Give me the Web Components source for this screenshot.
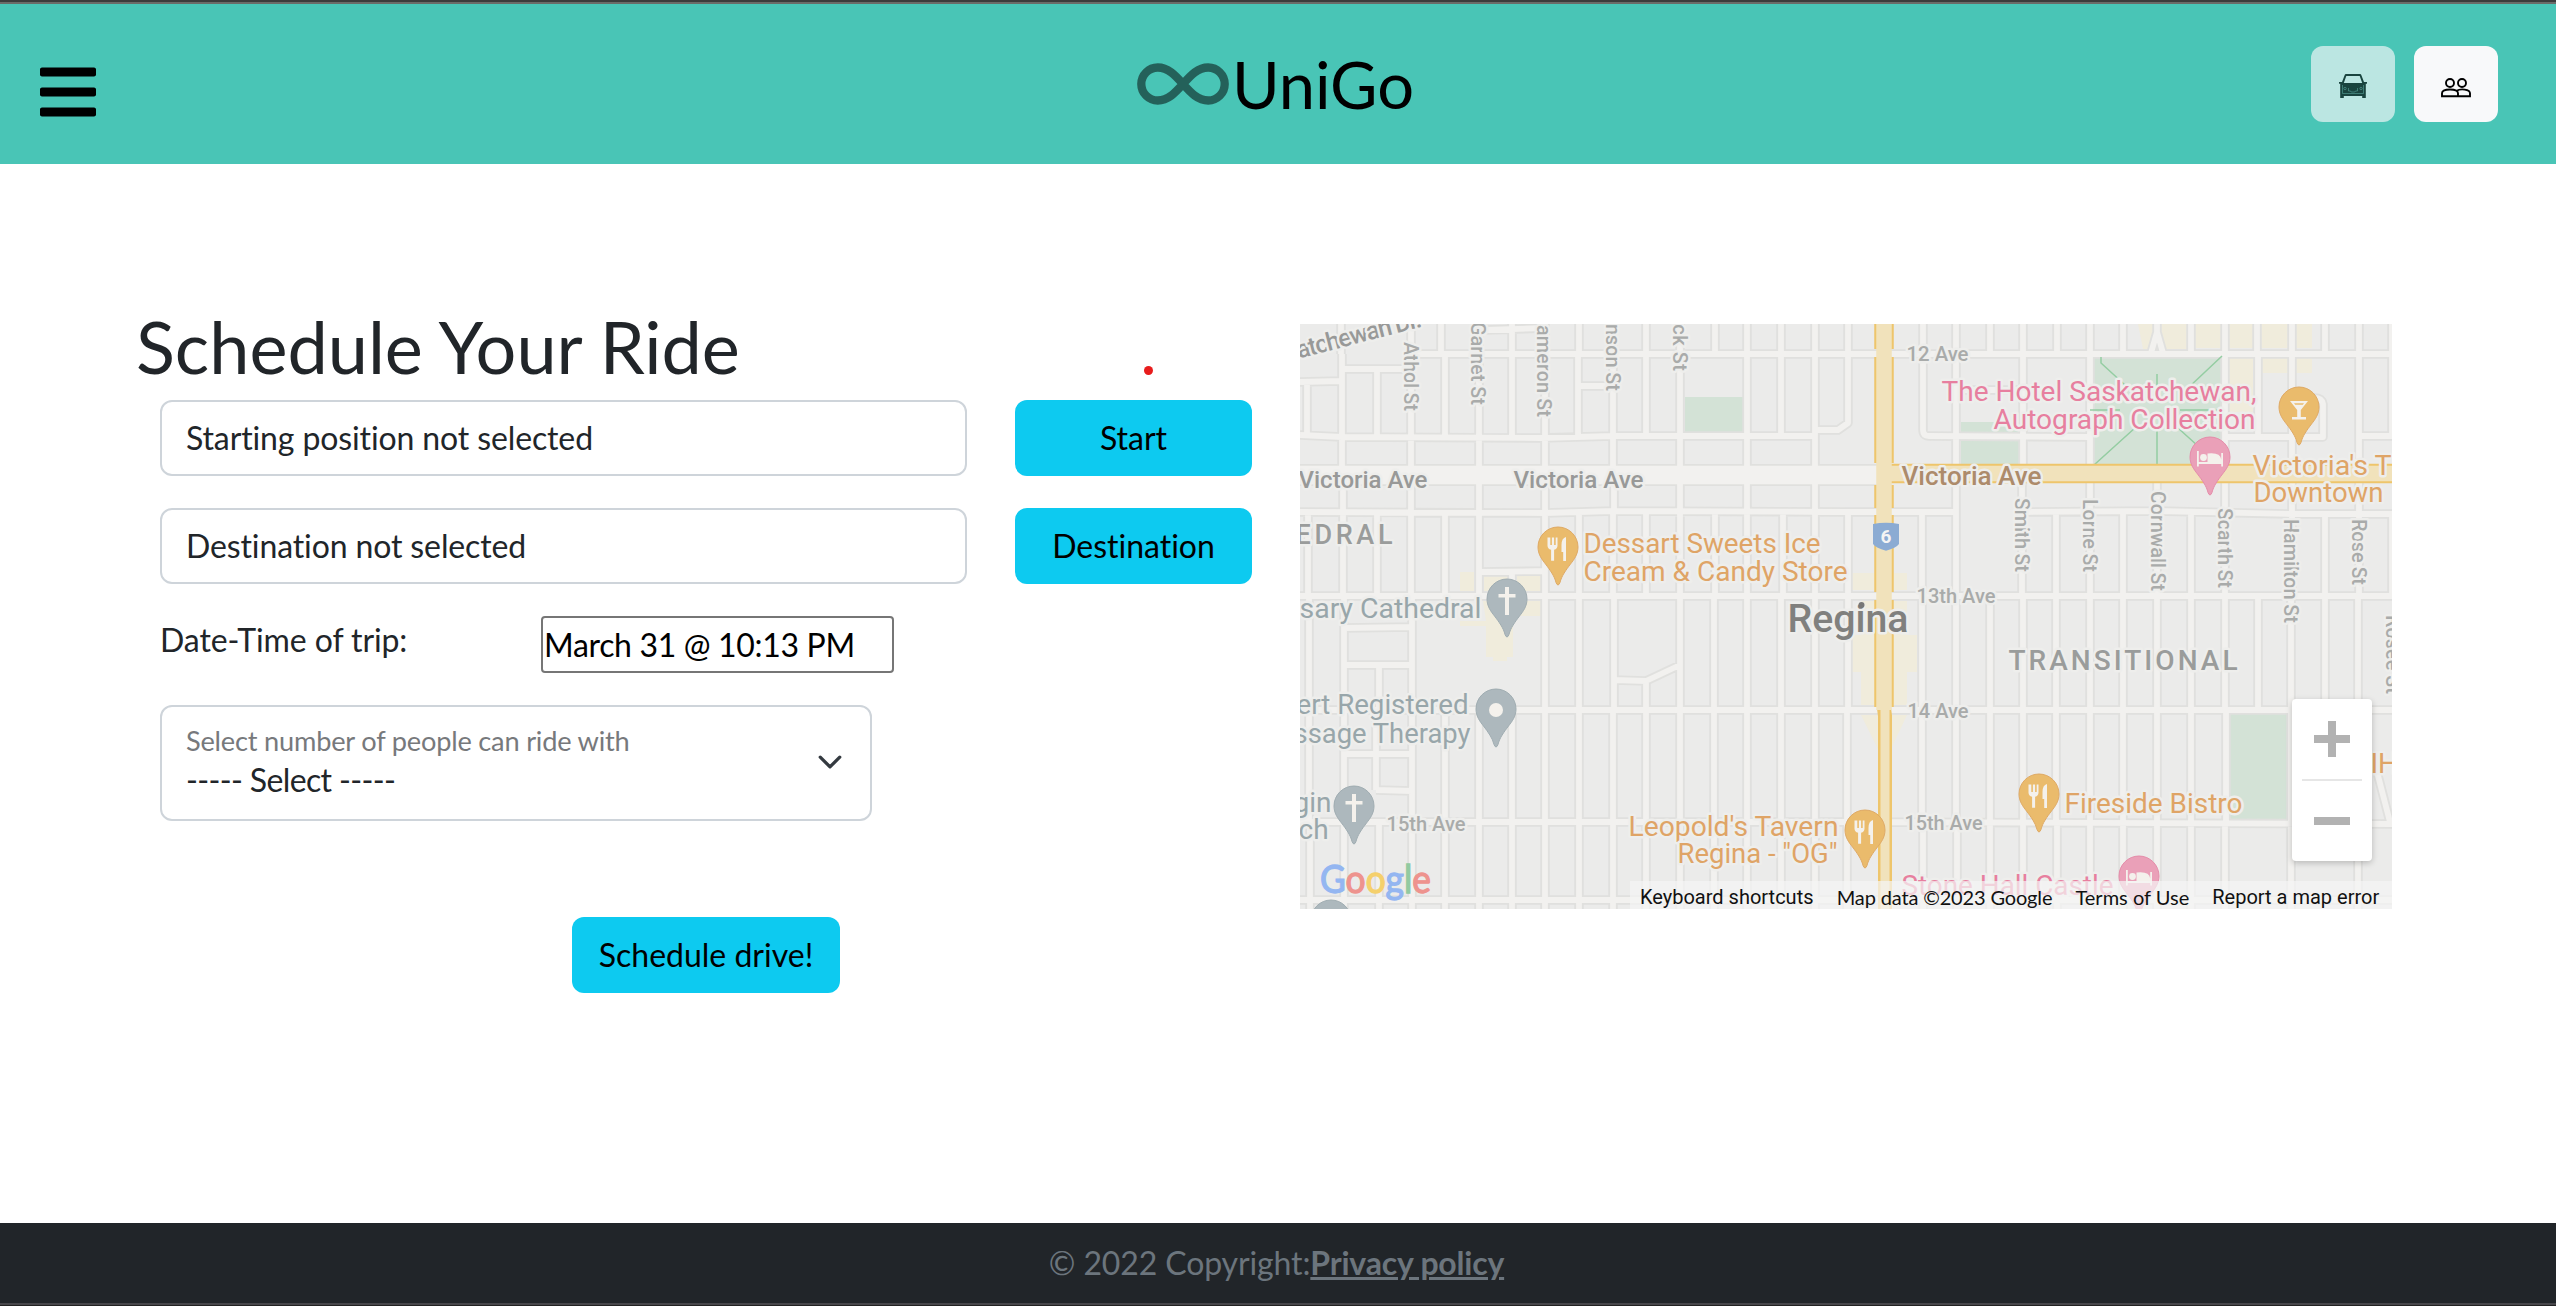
<!DOCTYPE html>
<html lang="en">
<head>
<meta charset="utf-8">
<title>UniGo</title>
<style>
html,body{margin:0;height:100%}
body{font-family:Lato,"Open Sans",sans-serif;font-size:32px;line-height:48px;color:#212529;background:#fff;overflow:hidden;font-variant-ligatures:none}
</style>
</head>
<body>
<unigo-app></unigo-app>
<script>
const define=(name,html,setup)=>customElements.define(name,class extends HTMLElement{
  constructor(){super();this.attachShadow({mode:'open'}).innerHTML=html;if(setup)setup(this.shadowRoot,this)}
});

define('icon-button',`<style>
:host{display:block;width:84px;height:76px}
button{all:unset;box-sizing:border-box;width:100%;height:100%;border-radius:12px;background:#f8f9fa;color:#000;display:flex;align-items:center;justify-content:center}
:host([muted]) button{opacity:.65}
</style><button><slot></slot></button>`);

define('unigo-header',`<style>
:host{display:block;border-top:2px solid #3c3c3c}
header{box-sizing:border-box;height:162px;border-top:2px solid #6b6b68;background:#49c5b6;display:grid;grid-template-columns:1fr auto 1fr;align-items:center;padding:0 58px 0 40px}
.menu{display:block;padding-top:16px;width:56px;height:64px}
.logo{display:flex;align-items:center;font-size:65px;line-height:76px;color:#000;gap:3px;padding-left:13px}
.logo svg{opacity:.5;display:block}
nav{display:flex;justify-content:flex-end;gap:19px}
</style><header>
<svg class="menu" viewBox="0 0 448 512"><path d="M16 132h416c8.8 0 16-7.2 16-16V76c0-8.800-7.200-16-16-16H16C7.200 60 0 67.200 0 76v40c0 8.800 7.200 16 16 16zm0 160h416c8.800 0 16-7.200 16-16v-40c0-8.800-7.200-16-16-16H16c-8.800 0-16 7.200-16 16v40c0 8.800 7.200 16 16 16zm0 160h416c8.800 0 16-7.200 16-16v-40c0-8.800-7.200-16-16-16H16c-8.800 0-16 7.200-16 16v40c0 8.800 7.200 16 16 16z"/></svg>
<div class="logo"><svg width="92" height="42" viewBox="0 0 92 42"><path d="M46 21C38 12 31 4.500 20.800 4.500a16.500 16.500 0 0 0 0 33C31 37.500 38 30 46 21S61 4.500 71.200 4.500a16.500 16.500 0 0 1 0 33C61 37.500 54 30 46 21z" fill="none" stroke="#000" stroke-width="8.300"/></svg><span>UniGo</span></div>
<nav>
<icon-button muted><svg width="28" height="24" viewBox="0 0 28 24" style="margin-top:4px"><path fill-rule="evenodd" d="M7.500 0h13c1 0 1.700.500 2 1.400L25 8h3v1.800h-1.200V24h-3.600v-2H4.800v2H1.200V9.800H0V8h3L5.500 1.400C5.800.500 6.500 0 7.500 0zM7.300 1.900 4.800 9h18.400L20.700 1.900z"/><g fill="none" stroke="#5f9089" stroke-width=".6"><path d="M3.500 11v8.500h21V11M9.500 14v3h2l.7 1h3.600l.7-1h2v-3"/><circle cx="6" cy="14.500" r="1.200"/><circle cx="22" cy="14.500" r="1.200"/></g></svg></icon-button>
<icon-button><svg width="30" height="20" viewBox="0 0 30 20" style="margin-top:8px"><g fill="none" stroke="#000" stroke-width="1.900"><circle cx="9" cy="5" r="4"/><circle cx="21" cy="5" r="4"/><path d="M1 18.300v-3c0-5 16-5 16 0v3zM15.500 12.900c4-2.600 13.500-1.700 13.500 2.400v3H17"/></g></svg></icon-button>
</nav></header>`);

define('ride-field',`<style>
:host{display:block}
div{box-sizing:border-box;height:76px;border:2px solid #ced4da;border-radius:12px;padding:12px 24px;letter-spacing:-.12px}
</style><div><slot></slot></div>`);

define('ride-button',`<style>
:host{display:block}
button{all:unset;box-sizing:border-box;display:block;width:100%;height:76px;padding:14px 0;text-align:center;border-radius:12px;background:#0dcaf0;color:#000;font:inherit;font-variant-ligatures:none}
</style><button><slot></slot></button>`);

define('date-field',`<style>
:host{display:grid;grid-template-columns:381px 353px;align-items:start}
.box{box-sizing:border-box;height:57px;border:2px solid #767676;border-radius:4px;padding:0 1px;color:#000;line-height:53px;letter-spacing:-.33px}
::slotted(span){letter-spacing:-.1px}
</style><slot name="label"></slot><div class="box"><slot></slot></div>`);

define('floating-select',`<style>
:host{display:block}
.box{box-sizing:border-box;width:712px;height:116px;border:2px solid #ced4da;border-radius:12px;padding:14px 27px 0 24px;display:flex;justify-content:space-between}
.label{font-size:27.200px;line-height:40px;color:#77797c;letter-spacing:-.2px}
.value{line-height:38px;letter-spacing:-.63px}
svg{margin-top:28px;display:block}
</style><div class="box"><div><div class="label"><slot name="label"></slot></div><div class="value"><slot></slot></div></div>
<svg width="26" height="26" viewBox="0 0 16 16" fill="none" stroke="#343a40" stroke-width="2" stroke-linecap="round" stroke-linejoin="round"><path d="m2 5 6 6 6-6"/></svg></div>`);

define('ride-form',`<style>
:host{display:block;width:1116px;position:relative}
h1{font-weight:400;font-size:72px;line-height:86px;margin:0 0 11px}
.rows{display:flex;flex-direction:column;gap:32px;padding-left:24px}
.row{display:grid;grid-template-columns:807px 237px;gap:48px}
.submit{width:268px;margin:64px 0 0 412px}
.dot{position:absolute;left:1008px;top:63px;width:9px;height:9px;border-radius:50%;background:#e81c1c}
</style><h1>Schedule Your Ride</h1><i class="dot"></i>
<div class="rows">
<div class="row"><ride-field>Starting position not selected</ride-field><ride-button>Start</ride-button></div>
<div class="row"><ride-field>Destination not selected</ride-field><ride-button>Destination</ride-button></div>
<date-field><span slot="label">Date-Time of trip:</span>March 31 @ 10:13 PM</date-field>
<floating-select><span slot="label">Select number of people can ride with</span>----- Select -----</floating-select>
<ride-button class="submit">Schedule drive!</ride-button>
</div>`);

define('zoom-control',`<style>
:host{display:block;width:80px;height:162px;box-sizing:border-box;background:#fff;border-radius:4px;box-shadow:0 2px 6px rgba(0,0,0,.22)}
svg{display:block}
</style><svg width="80" height="162"><path d="M22 40h36M40 22v36M22 122h36" stroke="#b2b2b2" stroke-width="8"/><path d="M10 81h60" stroke="#e6e6e6" stroke-width="2"/></svg>`);

define('map-credits',`<style>
:host{display:flex;height:28px;font:20px/33px Roboto,sans-serif;color:#111;background:rgba(245,245,245,.7);overflow:hidden}
span{white-space:nowrap;padding-left:10px;box-sizing:border-box}
.l{font-family:Lato,sans-serif}
</style><span style="width:196px">Keyboard shortcuts</span><span class="l" style="width:240px;padding-left:11px;letter-spacing:-.15px">Map data ©2023 Google</span><span class="l" style="width:137px">Terms of Use</span><span style="width:190px">Report a map error</span>`);

/* Street network as [y0, y1, xs] verticals grouped by the band between two avenues. */
const bands=[
 [-4,30,[41,111,141,179,212,245,279,313,346,380,415,447,481,515,548,623,656,690,723,757,790,823,891,925,957,992,1025,1059,1092]],
 [30,113,[42,111,145,179,212,245,278,313,346,380,447,481,515,656,723,790,925,958,992,1059,1092]],
 [113,151,[42,111,179,245,313,380,447,515,656,723,790,925,992,1059]],
 [151,188,[43,111,179,245,314,380,447,515,656,722,790,857,925,992,1059]],
 [188,272,[8,43,77,111,145,179,245,279,313,346,380,415,447,483,515,548,622,656,722,756,790,823,857,891,925,992,1025,1059,1092]],
 [272,386,[9,44,112,245,279,314,380,414,447,481,515,548,622,656,690,723,756,790,823,857,891,925,958,991,1025,1058]],
 [386,498,[9,44,112,145,179,212,245,279,313,346,380,414,447,481,515,547,622,656,690,723,756,790,823,857,891,926,991,1058]],
 [498,590,[10,44,79,112,145,179,212,245,279,313,346,380,414,447,481,515,547,623,657,690,723,757,790,823,857,891,925,991,1058]]
];
const roads=bands.map(([a,b,xs])=>xs.map(x=>`M${x} ${a}V${b}`).join('')).join('')+
 'M111 30H1096M0 111L42 113 240 114 313 112H515M0 188L245 189 313 187 548 188H656M722 188L857 187 992 190H1096M-4 272H1096M-4 386H1096M-4 498L548 498 1096 500M-4 576H1096'+
 'M0 58L40 57M42 45H111M7 58V112M77 45V113M278 62H313M185 6L245 4M179 248L245 247M212 248V272M44 304L112 303M44 341H112M79 341V386M314 356L346 357 380 341M346 357V386M44 430H112M76 386V466M76 466L112 467'+
 'M515 106H538L548 99V30M623 30V106Q623 112 629 112L790 113M656 66H723M925 113H1023V80Q1022 74 1014 74M1059 112H1096M857 -4V8L851 29M857 8L863 29M1075 440L1090 498';

const pinShape='M0 0C11 0 20 9 20 20C20 27 16.500 32 12.500 37C8 43 3.500 49 2 55.500Q1 58 0 58Q-1 58-2 55.500C-3.500 49-8 43-12.500 37C-16.500 32-20 27-20 20C-20 9-11 0 0 0Z';
const glyphs={
 food:'<path d="M-10.500 10.500v8q0 3.500 3.600 4.200v11h3v-11q3.400-.7 3.400-4.200v-8h-1.800v7.500h-1.600v-7.500h-2.200v7.500h-1.600v-7.500zM8 10q-4.500 1-4.500 8v7h1.700v9H8z"/>',
 cross:'<path d="M-2 8h4v7h6.500v3.500H2V36h-4V18.500h-6.500V15H-2z"/>',
 dot:'<circle cy="21" r="7"/>',
 bed:'<path d="M-13 14h1.800v11H-2.500V16.500q13-1.500 13.700 6V16H13v13.500h-1.800V27h-22.400v2.500H-13z"/><circle cx="-6.500" cy="20.500" r="3.400"/>',
 glass:'<path d="M-9 14H9L1.800 23v7H7v2.500H-7V30h5.200v-7zm4 2.200 1.200 1.600h7.600L5 16.200z" fill-rule="evenodd"/>'
};
const tints={o:['#eabb6c','#dfaa66'],g:['#adb8bd','#a0adb2'],p:['#eaa0b8','#e48daa']};
const pins=[[258,203,'food','o'],[207,255,'cross','g'],[196,365,'dot','g'],[54,462,'cross','g'],[31,576,'dot','g'],[565,486,'food','o'],[739,450,'food','o'],[839,532,'bed','p'],[910,113,'bed','p'],[999,63,'glass','o']]
 .map(([x,y,g,t])=>`<g transform="translate(${x} ${y})"><path d="${pinShape}" fill="${tints[t][0]}" stroke="${tints[t][1]}"/><g fill="#f4f1ec">${glyphs[g]}</g></g>`).join('');

const O='#dfa466',P='#e77f9f',G='#98a6aa',S='#a9abaa',A='#989998';
/* x, baseline, text, size, colour, drawn length, weight */
const labels=[
 [285,229,'Dessart Sweets Ice',28,O,237],[285,257,'Cream &amp; Candy Store',28,O,264],
 [330,512,"Leopold's Tavern",28,O,210],[379,539,'Regina - "OG"',28,O,160],[766,489,'Fireside Bistro',28,O,178],
 [954,151,"Victoria's T",28,O,139],[955,178,'Downtown',28,O,130],[1072,449,'IH',28,O,0],
 [643,77,'The Hotel Saskatchewan,',28,P,315],[695,105,'Autograph Collection',28,P,262],[603,571,'Stone Hall Castle',28,P,212],
 [1,294,'sary Cathedral',28,G,182],[-2,390,'ert Registered',28,G,172],[-5,419,'ssage Therapy',28,G,177],[-5,488,'gin',28,G,0],[0,515,'ch',28,G,0],
 [0,164,'Victoria Ave',24,A,129,'500'],[215,164,'Victoria Ave',24,A,130,'500'],[603,161,'Victoria Ave',26,'#ad8b6b',140,'500'],
 [-3,220,'EDRAL',27,'#9a9c9b',97,'500'],[710,346,'TRANSITIONAL',28,'#9a9c9b',229,'500'],[489,308,'Regina',39,'#80807e',121,'500'],
 [608,37,'12 Ave',20,S,62,'500'],[618,279,'13th Ave',20,S,79,'500'],[609,394,'14 Ave',20,S,61,'500'],[606,506,'15th Ave',20,S,78,'500'],[88,507,'15th Ave',20,S,79,'500']
].map(([x,y,t,s,c,l,w])=>`<text x="${x-1.5}" y="${y-.5}" font-size="${s}" fill="${c}" ${l?`textLength="${l}" lengthAdjust="${/^(EDRAL|TRANS)/.test(t)?'spacing':'spacingAndGlyphs'}"`:''} ${w?`font-weight="${w}"`:''}>${t}</text>`).join('');
/* baseline x, end y, text, length */
const streets=[[104,87,'Athol St',69],[171.500,81,'Garnet St',83],[237.500,93,'ameron St',92],[306.500,67,'nson St',67],[373,47,'ack St',58],[715.500,248,'Smith St',74],[783.500,248,'Lorne St',73],[851,267,'Cornwall St',100],[918,264,'Scarth St',80],[984.500,299,'Hamilton St',104],[1052.500,261,'Rose St',66],[1086,370,'Rosee St',79]]
 .map(([x,y,t,l])=>`<text transform="translate(${x-.5} ${y-l}) rotate(90)" font-size="20" font-weight="500" fill="${S}" textLength="${l}">${t}</text>`).join('');

define('ride-map',`<style>
:host{display:block;position:relative;width:1092px;height:585px;overflow:hidden;background:#ebebea}
svg.map{display:block;font-family:Roboto,sans-serif}
.labels text{stroke:#eeeeec;stroke-width:5px;paint-order:stroke;stroke-linejoin:round}
zoom-control{position:absolute;left:992px;top:375px}
map-credits{position:absolute;left:330px;right:0;bottom:0}
</style>
<svg class="map" width="1092" height="585" viewBox="0 0 1092 585">
<g fill="#d3e2d6"><path d="M385 73h58v36h-58zM661 98h59v42h-59zM794 33h128v107H794zM930 390h58v106h-58z"/></g>
<g fill="#f0ecdc"><path d="M838 0h49v25h-44zM893 0h29v24h-29zM928 0h26v24h-26zM960 0h52v24h-52zM928 34h25v54h-25zM961 34h51v15h-51zM160 248h14v19h-14zM184 251h24v16h-24zM217 251h24v16h-24zM183 277h58v15h-28v41h-6v4h-14v-4h-7V302h-26v-5h26zM552 249h55v17h-55zM561 277h46v34h10v37h-10v33h-46v-33h-9v-37h9zM561 391h46l-16 34h-13z"/></g>
<path d="${roads}" fill="none" stroke="#e0e0de" stroke-width="9.500" stroke-linejoin="round"/>
<path d="M-4 151H584" stroke="#e0e0de" stroke-width="22"/>
<path d="${roads}" fill="none" stroke="#f2f1ef" stroke-width="5.800" stroke-linejoin="round"/>
<path d="M-4 151H584" stroke="#f2f1ef" stroke-width="18.500"/>
<path d="M801 33v6l24 22M922 32l-34 32M857 50v20M790 86h30M880 86h42M794 141l42-38M857 106v34M878 104l20 18" fill="none" stroke="#94cda2" stroke-width="1.500"/>
<path d="M584-4V384L585 392V590" fill="none" stroke="#eec56b" stroke-width="14"/>
<path d="M584-4V25M584 33V139M584 161V184M584 191V268M584 276V383M590 149.500H1096" fill="none" stroke="#eec56b" stroke-width="19.500"/>
<path d="M584-4V386M580 149.500H1096" fill="none" stroke="#f1e2bb" stroke-width="15.500"/>
<path d="M585 380V590" fill="none" stroke="#f1e2bb" stroke-width="9"/>
<path d="M573 200q13-2.500 26 0v20q-3 4-13 6.700Q576 224 573 220z" fill="#8babd3"/>
<text x="586" y="219" font-size="19" font-weight="700" fill="#f4f4f4" text-anchor="middle">6</text>
<g class="labels">${streets}<text transform="translate(-1 34.500) rotate(-14.500)" font-size="25" font-weight="500" fill="${A}" textLength="128">atchewan Dr.</text>${labels}</g>
<circle cx="561.500" cy="281" r="3" fill="#777"/>
${pins}
<text x="20" y="569" font-family="Lato,sans-serif" font-size="38" textLength="111" lengthAdjust="spacingAndGlyphs" stroke-width="1.300"><tspan fill="#94b6f1" stroke="#94b6f1">G</tspan><tspan fill="#ee938e" stroke="#ee938e">o</tspan><tspan fill="#f5d06c" stroke="#f5d06c">o</tspan><tspan fill="#94b6f1" stroke="#94b6f1">g</tspan><tspan fill="#92caa0" stroke="#92caa0">l</tspan><tspan fill="#ee938e" stroke="#ee938e">e</tspan></text>
</svg>
<zoom-control></zoom-control><map-credits></map-credits>`);

define('unigo-footer',`<style>
:host{display:block;background:#212529}
footer{height:80px;display:flex;justify-content:center;align-items:center;color:#6c757d;letter-spacing:-.12px;padding-right:3px}
a{color:inherit;font-weight:700;text-decoration:underline;letter-spacing:-.2px}
.edge{height:2px;background:#47464a;border-bottom:1px solid #222}
</style><footer><span>© 2022 Copyright:</span><a>Privacy policy</a></footer><div class="edge"></div>`);

define('unigo-app',`<style>
:host{display:flex;flex-direction:column;height:1306px}
main{flex:1;display:flex;align-items:flex-start;gap:48px;padding-left:136px}
ride-form{margin-top:139px}
ride-map{margin-top:160px}
</style><unigo-header></unigo-header><main><ride-form></ride-form><ride-map></ride-map></main><unigo-footer></unigo-footer>`);
</script>
</body>
</html>
